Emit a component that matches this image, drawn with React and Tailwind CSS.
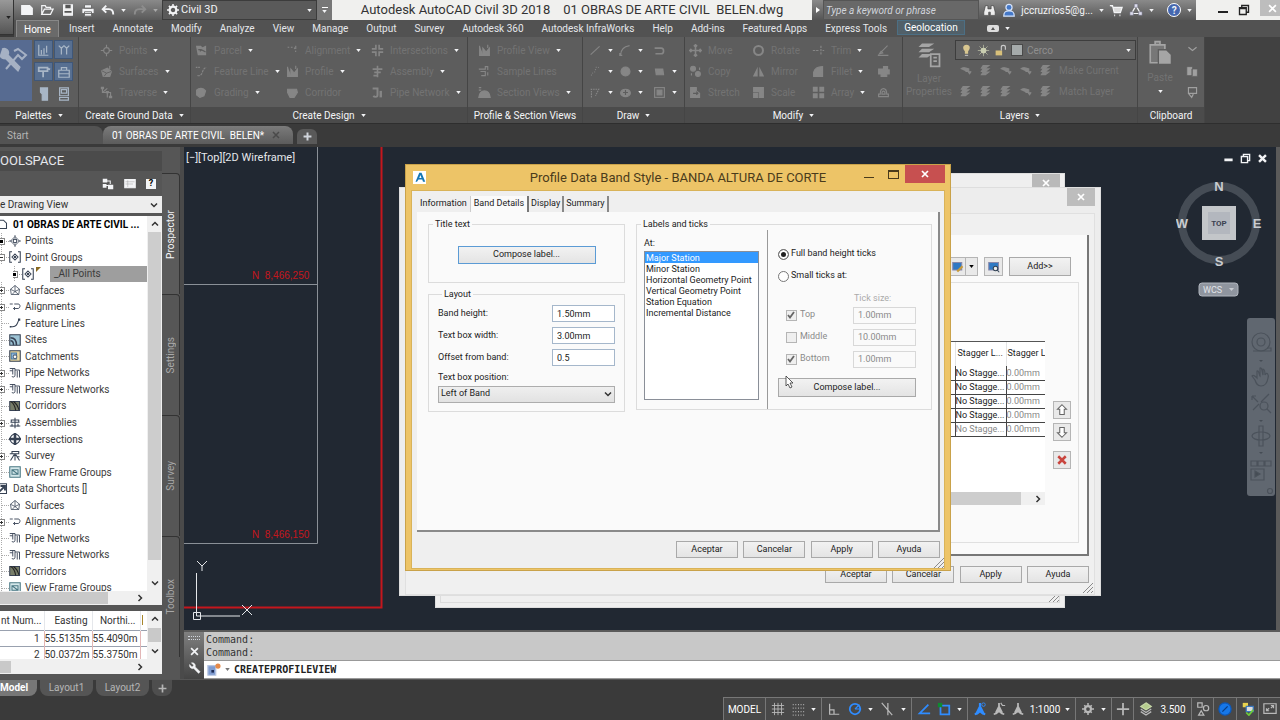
import React, { useState } from 'react';

const Icon = ({ size = 14, className = '', children }) => (
  <svg
    width={size}
    height={size}
    viewBox="0 0 16 16"
    fill="none"
    stroke="currentColor"
    strokeWidth="1.4"
    className={`shrink-0 ${className}`}
    aria-hidden="true"
  >
    {children}
  </svg>
);

const Caret = ({ className = 'text-gray-100' }) => (
  <svg width="5" height="3" viewBox="0 0 6 4" className={`shrink-0 ${className}`} aria-hidden="true">
    <path d="M0 0h6L3 4z" fill="currentColor" />
  </svg>
);

const Chevron = ({ className = '' }) => (
  <svg width="8" height="8" viewBox="0 0 8 8" fill="none" stroke="#333" strokeWidth="1.5" className={`shrink-0 ${className}`} aria-hidden="true">
    <path d="M1 2.5 4 5.5 7 2.5" />
  </svg>
);

const glyphs = {
  points: <><circle cx="8" cy="8" r="3.5" /><path d="M8 1v4M8 11v4M1 8h4M11 8h4" /></>,
  surface: <><path d="M2 7 9 4l5 4-2 6H4z" fill="currentColor" /><path d="M2 7l6 3 6-2M8 10l-3 4" stroke="#5d5d5d" strokeWidth="1" /><path d="M12 1v4" /></>,
  traverse: <><path d="M3 2v6h6v6M3 8l6-5M9 8h4v5" /><path d="M1 1h4v3H1zM7 6h4v3H7zM11 12h4v3h-4z" fill="currentColor" stroke="none" /></>,
  parcel: <><path d="M2 3h5l2 2 4-2v10H4z" fill="currentColor" /><path d="M6 9c2-3 4-1 7 1M4 7h4" stroke="#5d5d5d" /></>,
  featureLine: <><path d="M3 13c3 1 5-1 6-4s2-5 5-6" strokeDasharray="3 1" /><path d="M1 3h5" strokeDasharray="2 1" /></>,
  grading: <path d="M2 5c3-3 8-3 11 1l-2 6-5 2-4-3z" fill="currentColor" />,
  alignment: <><path d="M2 4h5c4 0 5 2 5 8" strokeDasharray="2 2" /><path d="M12 2v4" /></>,
  profile: <><path d="M2 2v12h12V5l-4 5-4-5v7" fill="currentColor" /><path d="M12 1v4" /></>,
  corridor: <path d="M2 4h11l1 4-4 6H5L2 8z" fill="currentColor" />,
  intersection: <path d="M6 1v5H1M10 1v5h5M6 15v-5H1M10 15v-5h5" strokeWidth="2" />,
  assembly: <path d="M8 1v14M2 5h12M4 9h8M3 13h4" strokeWidth="2" />,
  pipe: <><path d="M2 3h6v8c0 3-4 3-5 1" strokeWidth="2.4" /><path d="M12 6v8" strokeWidth="3" /></>,
  sample: <path d="M1 5h8V2h3v4M3 8h6v5H4M12 9v4" />,
  section: <><path d="M1 14c1-7 4-8 7-8s6 1 7 8z" fill="currentColor" /><path d="M1 2h3M1 5h3" /></>,
  line: <path d="M2 13 13 3" />,
  arc: <path d="M2 14C2 7 6 3 13 2M1 11v3h3" />,
  polyline: <path d="M2 5h8c4 0 4 7 0 7H3" strokeWidth="2" />,
  curve: <path d="M3 13c0-5 5-2 5-7s3-4 5-2" strokeDasharray="1 2" />,
  circle: <circle cx="8" cy="8" r="5.5" fill="currentColor" />,
  rect: <path d="M3 5h9l1 7H4z" fill="currentColor" />,
  polygon: <path d="M3 14V4h9l-4 8M2 4h3" strokeDasharray="2 1" />,
  ellipse: <><ellipse cx="8" cy="8.5" rx="6" ry="4.5" fill="currentColor" /><path d="M8 5v6M5 8h6" stroke="#5d5d5d" /></>,
  hatch: <><rect x="2" y="2" width="12" height="12" /><rect x="5" y="5" width="6" height="6" fill="currentColor" /></>,
  move: <path d="M8 1v14M1 8h14M6 3l2-2 2 2M6 13l2 2 2-2M3 6 1 8l2 2M13 6l2 2-2 2" strokeWidth="2" />,
  copy: <><circle cx="5" cy="4.5" r="3" fill="currentColor" /><circle cx="11" cy="11" r="3" fill="currentColor" /><path d="M3 10v3M13 3v3" /></>,
  stretch: <><path d="M2 2h7v4l4 3v5H2z" fill="currentColor" /><path d="M5 9h6M9 7l2 2-2 2" stroke="#5d5d5d" /></>,
  rotate: <circle cx="8" cy="8" r="5.5" strokeWidth="2.5" />,
  mirror: <path d="M7 2v12H1zM9 2v12h6z" fill="currentColor" stroke="none" />,
  scale: <><path d="M2 2h12v12H9V7H2z" fill="currentColor" /><path d="M2 9h5v5H2z" fill="currentColor" /></>,
  trim: <path d="M1 8h8M11 2v12M13 8h2" strokeDasharray="3 1" />,
  fillet: <path d="M2 14V9c1-4 4-7 11-7v12z" fill="currentColor" />,
  array: <path d="M1 1h6v6H1zM9 1h6v6H9zM1 9h6v6H1zM9 9h6v6H9z" fill="currentColor" stroke="none" />,
  erase: <path d="m5 10 8-8M3 12l2-3 2 2zM1 14h13" />,
  explode: <path d="M2 5h6V2h5v4h2v5h-3v3H5v-3H2z" fill="currentColor" />,
  offset: <path d="M2 13h12v-3h-2c0-9-8-9-8 0H2zM6 10c0-5 4-5 4 0z" />,
  layerA: <path d="M2 6c4-3 7-1 10 0v3H8M11 9l2 3 2-3" fill="currentColor" />,
  layerB: <path d="M5 2h7L8 5H3zM5 6h7L8 9H3zM5 10h7l-4 3H3z" fill="currentColor" />,
};

const Dim = ({ name, size = 13 }) => <Icon size={size} className="text-[#868686]">{glyphs[name]}</Icon>;

const RibbonItem = ({ icon, label, arrow = true }) => (
  <button className="flex h-[21px] items-center gap-1.5 whitespace-nowrap">
    <Dim name={icon} />
    {label && <span className="text-[#737373]">{label}</span>}
    {arrow && <Caret />}
  </button>
);

const RibbonColumn = ({ items, className }) => (
  <div className={`shrink-0 ${className}`}>
    {items.map((item, i) => <RibbonItem key={i} {...item} />)}
  </div>
);

const RibbonPanel = ({ title, arrow = true, className, children }) => (
  <section className={`flex shrink-0 flex-col border-r border-[#454545] ${className}`}>
    <div className="flex flex-1 overflow-hidden bg-[#5d5d5d] pt-[3px]">{children}</div>
    <h2 className="flex h-4 items-center justify-center gap-1.5 bg-[#4b4b4b] text-gray-100">
      {title}
      {arrow && <Caret />}
    </h2>
  </section>
);

const ribbonTabs = [
  'Home', 'Insert', 'Annotate', 'Modify', 'Analyze', 'View', 'Manage', 'Output', 'Survey',
  'Autodesk 360', 'Autodesk InfraWorks', 'Help', 'Add-ins', 'Featured Apps', 'Express Tools',
];

const QuickAccess = () => (
  <div className="flex w-[148px] shrink-0 items-center justify-between bg-gradient-to-b from-[#8a8a8a] to-[#595959] pr-1 pl-1.5 text-gray-100">
    <button aria-label="New"><Icon><path d="M2 3h9l3 3v7H2z" fill="currentColor" /></Icon></button>
    <button aria-label="Open"><Icon><path d="M2 13V3h4l1 2h5v2M2 13l3-6h10l-3 6z" /></Icon></button>
    <button aria-label="Save"><Icon><path d="M3 2h10v12H3z" fill="#eee" /><path d="M5 2h6v4H5zM4 9h8v2H4z" fill="#555" stroke="none" /></Icon></button>
    <button aria-label="Plot"><Icon><path d="M4 2h8v4H4zM1 6h14v6H1zM4 10h8v5H4z" fill="currentColor" stroke="#666" strokeWidth="1" /></Icon></button>
    <button aria-label="Undo"><Icon><path d="M6 3 2 7l4 4M2 7h7c4 0 5 2 5 6" strokeWidth="2.2" /></Icon></button>
    <Caret />
    <button aria-label="Redo" className="text-[#8d8d8d]"><Icon><path d="m10 3 4 4-4 4M14 7H7c-4 0-5 2-5 6" strokeWidth="2.2" /></Icon></button>
    <Caret className="text-[#aaa]" />
  </div>
);

const TitleBar = () => (
  <div className="flex h-5 shrink-0 bg-[#f0f0ee]">
    <QuickAccess />
    <label className="flex w-[155px] shrink-0 items-center gap-0.5 border border-[#3c3c3c] bg-[#5a5a5a] px-1 text-[11px] text-gray-100">
      <Icon size={12}><circle cx="8" cy="8" r="4.5" strokeWidth="3" /><path d="M8 0v3M8 13v3M0 8h3M13 8h3M2.5 2.5l2 2M11.5 11.5l2 2M2.5 13.5l2-2M11.5 4.5l2-2" strokeWidth="2" /></Icon>
      <select aria-label="Workspace" className="min-w-0 flex-1 appearance-none outline-none"><option>Civil 3D</option></select>
      <Caret />
    </label>
    <button aria-label="Customize" className="flex w-[15px] shrink-0 flex-col items-center justify-center gap-0.5 bg-[#777]">
      <span className="h-px w-1.5 bg-white" />
      <Caret />
    </button>
    <h1 className="flex flex-1 items-center justify-center text-[13px] whitespace-pre text-[#333]">
      {'Autodesk AutoCAD Civil 3D 2018    01 OBRAS DE ARTE CIVIL  BELEN.dwg'}
    </h1>
    <div className="flex shrink-0 bg-gradient-to-b from-[#8a8a8a] to-[#555] text-[10px] text-gray-100">
      <span className="flex w-[11px] items-center justify-center">
        <svg width="4" height="6" viewBox="0 0 4 6"><path d="M0 0v6l4-3z" fill="#fff" /></svg>
      </span>
      <input placeholder="Type a keyword or phrase" aria-label="Search" className="w-[156px] border border-[#555] bg-[#686868] px-0.5 italic placeholder:text-gray-300" />
      <div className="flex w-[217px] items-center justify-between px-1">
        <Icon size={13}><path d="M3 2h3v4h4V2h3l2 8v4H9v-4H7v4H1v-4z" fill="#eee" stroke="#444" strokeWidth=".8" /></Icon>
        <Icon size={14}><circle cx="8" cy="5" r="3.5" fill="#4478c8" stroke="#d5e3fa" /><path d="M2 15c0-5 2-6 6-6s6 1 6 6z" fill="#4478c8" stroke="#d5e3fa" /></Icon>
        <span>jccruzrios5@g...</span>
        <Caret />
        <Icon size={14}><path d="M1 3h3l2 8h7l2-6H5" fill="#ddd" /><path d="M6 14h1M12 14h1" strokeWidth="2" /></Icon>
        <Icon size={14}><path d="m8 3 5 9H3z" /><path d="M6 1h4v4H6zM1 10h4v4H1zM11 10h4v4h-4z" fill="#dde" stroke="#667" strokeWidth=".6" /></Icon>
        <Caret />
        <span className="ml-2 flex size-[14px] items-center justify-center rounded-full border border-white bg-[#4567b0] font-bold">?</span>
        <Caret />
      </div>
    </div>
    <div className="flex shrink-0 text-[#222]">
      <button aria-label="Minimize" className="flex w-8 items-center justify-end"><span className="mt-1 h-0.5 w-2.5 bg-[#222]" /></button>
      <button aria-label="Restore" className="flex w-8 items-center justify-center"><Icon size={12}><path d="M2 5h9v9H2zM2 6h9M5 5V2h9v9h-3" strokeWidth="1.8" /></Icon></button>
      <button aria-label="Close" className="h-4 w-5 bg-[#bdbdbd] pl-2 text-white">
        <Icon size={9}><path d="M2 2l12 12M14 2 2 14" strokeWidth="3" /></Icon>
      </button>
    </div>
  </div>
);

const RibbonTabs = () => (
  <nav className="flex h-[17px] shrink-0 items-stretch gap-0.5 bg-[#525252] pl-0.5 text-[10px] text-gray-200">
    {ribbonTabs.map((tab) => (
      <button
        key={tab}
        className={`whitespace-nowrap ${tab === 'Home' ? 'border border-b-0 border-[#888] bg-[#6a6a6a] px-[7px] text-white' : 'px-2'}`}
      >
        {tab}
      </button>
    ))}
    <button className="mb-0.5 border border-[#4c6f84] bg-[#516069] px-1.5 leading-3 text-white">Geolocation</button>
    <span className="ml-5 flex items-center gap-1.5">
      <svg width="12" height="7" viewBox="0 0 12 7"><rect width="12" height="7" rx="2" fill="#ddd" /><path d="M4 5l2-3 2 3z" fill="#555" /></svg>
      <Caret />
    </span>
  </nav>
);

const paletteIcons = [
  <path d="M2 2v12h11M5 8v5M8 6v7M11 3v8" />,
  <path d="M2 3l3 3v7M5 6l3-3M8 3l3 3v7M11 6l3-3" />,
  <path d="M2 3h10v4H2zM7 7v7M12 4l3 1" strokeWidth="2" />,
  <path d="M2 6h12v8H2zM5 6V3h6v3M2 10h12" />,
  <path d="M4 1h8v14H6V8L4 6z" fill="currentColor" />,
  <path d="M3 1h10v9H3zM5 3h6v4H5zM3 12h10v3H3z" />,
];

const Ribbon = () => (
  <div className="flex h-[86px] shrink-0 overflow-hidden bg-[#414141] text-[10px]">
    <RibbonPanel title="Palettes" className="w-[79px]">
      <button aria-label="Toolspace" className="h-[61px] w-8 bg-[#576b91] text-[#a6b1c4]">
        <Icon size={32} className="mb-5"><path d="M1 2c2-1 4 1 3 3l6 6-1 2-6-6C1 7 0 6 0 5" fill="currentColor" strokeWidth=".6" /><path d="M7 3l2-1 4 3-2 2-2-2-6 7" strokeWidth="1" /></Icon>
      </button>
      <div className="ml-0.5 grid grid-cols-2 content-start gap-x-px gap-y-[3px] text-[#a8b6c6]">
        {paletteIcons.map((path, i) => (
          <button key={i} aria-label={`Palette ${i + 1}`} className={`flex size-[19px] items-center justify-center ${i < 4 ? 'border border-[#3f5779] bg-[#576f91]' : ''}`}>
            <Icon>{path}</Icon>
          </button>
        ))}
      </div>
    </RibbonPanel>

    <RibbonPanel title="Create Ground Data" className="w-28">
      <RibbonColumn className="ml-[21px]" items={[
        { icon: 'points', label: 'Points' },
        { icon: 'surface', label: 'Surfaces' },
        { icon: 'traverse', label: 'Traverse' },
      ]} />
    </RibbonPanel>

    <RibbonPanel title="Create Design" className="w-[277px]">
      <RibbonColumn className="ml-1 w-[91px]" items={[
        { icon: 'parcel', label: 'Parcel' },
        { icon: 'featureLine', label: 'Feature Line' },
        { icon: 'grading', label: 'Grading' },
      ]} />
      <RibbonColumn className="w-[85px]" items={[
        { icon: 'alignment', label: 'Alignment' },
        { icon: 'profile', label: 'Profile' },
        { icon: 'corridor', label: 'Corridor', arrow: false },
      ]} />
      <RibbonColumn className="" items={[
        { icon: 'intersection', label: 'Intersections' },
        { icon: 'assembly', label: 'Assembly' },
        { icon: 'pipe', label: 'Pipe Network' },
      ]} />
    </RibbonPanel>

    <RibbonPanel title="Profile & Section Views" arrow={false} className="w-[115px]">
      <RibbonColumn className="ml-2.5" items={[
        { icon: 'profile', label: 'Profile View' },
        { icon: 'sample', label: 'Sample Lines', arrow: false },
        { icon: 'section', label: 'Section Views' },
      ]} />
    </RibbonPanel>

    <RibbonPanel title="Draw" className="w-[102px]">
      <RibbonColumn className="ml-1.5 w-[30px]" items={[{ icon: 'line' }, { icon: 'curve' }, { icon: 'polygon' }]} />
      <RibbonColumn className="w-[34px]" items={[{ icon: 'arc' }, { icon: 'circle' }, { icon: 'ellipse' }]} />
      <RibbonColumn className="" items={[{ icon: 'polyline', arrow: false }, { icon: 'rect' }, { icon: 'hatch' }]} />
    </RibbonPanel>

    <RibbonPanel title="Modify" className="w-[218px]">
      <RibbonColumn className="ml-1 w-[63px]" items={[
        { icon: 'move', label: 'Move', arrow: false },
        { icon: 'copy', label: 'Copy', arrow: false },
        { icon: 'stretch', label: 'Stretch', arrow: false },
      ]} />
      <RibbonColumn className="w-[60px]" items={[
        { icon: 'rotate', label: 'Rotate', arrow: false },
        { icon: 'mirror', label: 'Mirror', arrow: false },
        { icon: 'scale', label: 'Scale', arrow: false },
      ]} />
      <RibbonColumn className="w-[65px]" items={[
        { icon: 'trim', label: 'Trim' },
        { icon: 'fillet', label: 'Fillet' },
        { icon: 'array', label: 'Array' },
      ]} />
      <RibbonColumn className="" items={[
        { icon: 'erase', arrow: false },
        { icon: 'explode', arrow: false },
        { icon: 'offset', arrow: false },
      ]} />
    </RibbonPanel>

    <RibbonPanel title="Layers" className="w-[235px]">
      <button className="flex w-[52px] shrink-0 flex-col items-center leading-[13px] text-[#737373]">
        <Icon size={28} className="text-[#a5a5a5]">
          <path d="M4 2h7L8 4H2zM4 5h7L8 7H2zM4 8h6l-3 2H2z" fill="currentColor" stroke="none" />
          <path d="M9 8h5v7H9zM10.5 10h2M10.5 12h2" strokeWidth="1" />
        </Icon>
        <span className="mt-1">Layer<br />Properties</span>
      </button>
      <div className="flex-1 pr-px">
        <label className="flex h-5 items-center gap-1 border border-[#3d3d3d] bg-[#626262] px-1 text-[#8f8f8f]">
          <Icon size={13}><path d="M8 1c5 0 5 5 2 8v3H6V9C3 6 3 1 8 1z" fill="#d8c690" stroke="none" /><path d="M6 14h4" stroke="#bbb" /></Icon>
          <Icon size={13}><circle cx="8" cy="8" r="3.5" fill="#c9cdb0" stroke="none" /><path d="M8 1v14M1 8h14M3 3l10 10M13 3 3 13" stroke="#c9cdb0" strokeWidth=".8" /></Icon>
          <Icon size={13}><path d="M2 8h8v6H2z" fill="#d8c07a" stroke="none" /><path d="M9 8V4c0-3 5-3 5 0v3" stroke="#ccc" /></Icon>
          <span className="size-3 border border-[#4a4a4a] bg-[#a5aaaa]" />
          <select aria-label="Layer" className="min-w-0 flex-1 appearance-none outline-none"><option>Cerco</option></select>
          <Caret />
        </label>
        {['Make Current', 'Match Layer'].map((label, row) => (
          <div key={label} className="flex h-[21px] items-center gap-[7px] pl-1 whitespace-nowrap text-[#737373]">
            {['layerA', 'layerB', 'layerA', 'layerA', 'layerB'].map((name, i) => (
              <Dim key={i} name={row === 1 && i < 3 ? 'layerB' : name} />
            ))}
            <span>{label}</span>
          </div>
        ))}
      </div>
    </RibbonPanel>

    <RibbonPanel title="Clipboard" arrow={false} className="w-[67px]">
      <button className="flex w-11 flex-col items-center gap-1.5 text-[#737373]">
        <Icon size={26} className="text-[#a5a5a5]">
          <path d="M2 3h9v11H2zM5 1h3v2H5z" strokeWidth="1" fill="#777" />
          <path d="M7 6h5l3 3v6H7z" fill="currentColor" stroke="#5d5d5d" strokeWidth=".8" />
        </Icon>
        <span className="leading-3">Paste</span>
        <Caret />
      </button>
      <div className="flex flex-col pl-1 text-[#a0a0a0]">
        <span className="flex h-[21px] items-center"><Icon size={13}><path d="M3 4l5 4 5-4" /></Icon></span>
        <span className="flex h-[21px] items-center"><Icon size={13}><path d="M1 2h7v11H1zM7 5h7v9H7z" fill="currentColor" stroke="#5d5d5d" strokeWidth=".8" /></Icon></span>
        <span className="flex h-[21px] items-center"><Icon size={13}><path d="M3 2h10v7H3zM3 9l4 5 2-4" /></Icon></span>
      </div>
    </RibbonPanel>
  </div>
);

const FileTabs = () => (
  <div className="flex h-6 shrink-0 items-end border-t border-[#2e2e2e] bg-[#3a3a3a] pb-[3px] text-[10px] text-gray-300">
    <button className="h-[18px] w-[103px] rounded-tr-lg bg-[#535353] pl-[7px] text-left text-[#b5b5b5]">Start</button>
    <button className="flex h-[18px] w-[190px] items-center gap-2 rounded-t-lg bg-gradient-to-b from-[#7b7b7b] to-[#5c5c5c] pl-[9px] whitespace-pre text-white">
      {'01 OBRAS DE ARTE CIVIL  BELEN*'}
      <Icon size={8} className="text-[#4a4a4a]"><path d="M2 2l12 12M14 2 2 14" strokeWidth="3" /></Icon>
    </button>
    <button aria-label="New tab" className="ml-1 flex h-[15px] w-5 items-center justify-center rounded-t-md bg-[#595959]">
      <Icon size={9}><path d="M8 1v14M1 8h14" strokeWidth="3.5" /></Icon>
    </button>
  </div>
);

const treeGlyphs = {
  doc: <path d="M1 3h9l4 4v7H1z" />,
  points: <><circle cx="8" cy="8" r="2.5" /><path d="m8 2 6 6-6 6-6-6zM8 0v4M8 12v4M0 8h4M12 8h4" strokeWidth="1" /></>,
  group: <><path d="M4 1H1v14h3M12 1h3v14h-3" /><path d="m8 4 4 4-4 4-4-4z" /><circle cx="8" cy="8" r="1" /></>,
  surface: <path d="M8 2 2 7l1 7h10l1-7zM2 7l6 3 6-3M8 2v8l-4 4M8 10l5 4" strokeWidth="1" />,
  align: <path d="M1 4h4M7 4h5c4 0 3 6 0 6H6M8 8l-2 2 2 2" strokeWidth="1.2" />,
  feature: <><path d="M2 13h3c5 0 6-4 8-9" /><path d="M1 12h2v2H1zM12 2h3v3h-3z" fill="currentColor" stroke="none" /></>,
  site: <><path d="M1 1h14v14H1z" fill="#9cc3d4" /><path d="M2 5c6 0 8 4 8 10M2 9c3 0 4 2 4 6" strokeWidth="2" /></>,
  catchment: <><path d="M1 1h14v14H1z" fill="#e8d69c" /><path d="M3 4h7v8H3z" fill="#8fb9dd" stroke="#4779a8" /><circle cx="8" cy="9" r="2.5" fill="#fff" stroke="#567" /></>,
  pipes: <path d="M1 2h7v9c0 3-4 3-4 1M5 2v8M8 4h6v10M11 5v9M1 5h4" strokeWidth="1.2" />,
  corridor: <><path d="M1 2h13v12H1z" fill="#777d68" /><path d="M2 2c5 2 6 6 7 12M6 2c4 3 6 6 7 11" stroke="#222" /></>,
  assembly: <path d="M8 1v14M2 7h12M3 4h10v3H3zM1 12h14M4 9v4M12 9v4" />,
  intersection: <><circle cx="8" cy="8" r="6.5" /><path d="M8 0v16M0 8h16" strokeWidth="3.5" /></>,
  survey: <path d="M4 2h9v3H4zM8 5v9M7 6l-5 8M9 6l5 8M1 5h4M10 9h4" />,
  frame: <><path d="M1 1h14v14H1z" stroke="#4a7884" fill="#d4e7ea" /><path d="M4 5h8v6H4zM4 5l8 6" stroke="#4a7884" /></>,
  shortcut: <><path d="M1 1h13v13H1z" /><path d="M4 12 11 5M6 4h6v6" strokeWidth="2.5" /></>,
};

const treeItems = [
  { level: 0, icon: 'doc', label: '01 OBRAS DE ARTE CIVIL ...', bold: true },
  { level: 1, icon: 'points', label: 'Points', box: '•' },
  { level: 1, icon: 'group', label: 'Point Groups', box: '-' },
  { level: 2, icon: 'group', label: '_All Points', box: '•', selected: true },
  { level: 1, icon: 'surface', label: 'Surfaces', box: '+' },
  { level: 1, icon: 'align', label: 'Alignments', box: '+' },
  { level: 1, icon: 'feature', label: 'Feature Lines' },
  { level: 1, icon: 'site', label: 'Sites' },
  { level: 1, icon: 'catchment', label: 'Catchments' },
  { level: 1, icon: 'pipes', label: 'Pipe Networks', box: '+' },
  { level: 1, icon: 'pipes', label: 'Pressure Networks', box: '+' },
  { level: 1, icon: 'corridor', label: 'Corridors' },
  { level: 1, icon: 'assembly', label: 'Assemblies', box: '+' },
  { level: 1, icon: 'intersection', label: 'Intersections' },
  { level: 1, icon: 'survey', label: 'Survey', box: '+' },
  { level: 1, icon: 'frame', label: 'View Frame Groups' },
  { level: 0, icon: 'shortcut', label: 'Data Shortcuts []' },
  { level: 1, icon: 'surface', label: 'Surfaces' },
  { level: 1, icon: 'align', label: 'Alignments', box: '+' },
  { level: 1, icon: 'pipes', label: 'Pipe Networks' },
  { level: 1, icon: 'pipes', label: 'Pressure Networks' },
  { level: 1, icon: 'corridor', label: 'Corridors' },
  { level: 1, icon: 'frame', label: 'View Frame Groups' },
];

// Left half of an expander box sits outside the pane, as the tree is scrolled sideways.
const Expander = ({ box }) => (
  <svg width="9" height="16" viewBox="0 0 9 16" className="shrink-0" aria-hidden="true">
    <path d="M1.5 0v16" stroke="#aaa" strokeDasharray="1 1" />
    <path d="M2 8.5h7" stroke="#aaa" strokeDasharray="1 1" />
    {box && <rect x="-1.5" y="5.5" width="6" height="6" fill="#fff" stroke="#888" />}
    {box === '•' && <rect x="0" y="7" width="3" height="3" fill="#000" />}
    {(box === '-' || box === '+') && <path d="M0 8.5h3" stroke="#333" />}
    {box === '+' && <path d="M1.5 7v3" stroke="#333" />}
  </svg>
);

const TreeItem = ({ level, icon, label, box, bold, selected }) => (
  <li className="flex items-center whitespace-nowrap">
    {level === 0 && <Icon size={12} className="mr-1 -ml-1 text-gray-700">{treeGlyphs[icon]}</Icon>}
    {level > 0 && <span className={level === 2 ? 'ml-[13px] flex' : 'flex'}><Expander box={box} /></span>}
    {level > 0 && <Icon size={12} className="text-gray-700">{treeGlyphs[icon]}</Icon>}
    {selected && <svg width="5" height="5" className="mr-[9px] mb-2 ml-0.5"><path d="M0 0h5L0 5z" fill="#8a6a20" /></svg>}
    <span
      className={`${selected ? 'flex-1 self-stretch bg-[#9e9e9e] pl-1 leading-4' : level > 0 ? 'pl-1' : 'pl-px'} ${bold ? 'font-bold text-black' : ''}`}
    >
      {label}
    </span>
  </li>
);

const points = [
  ['1', '55.5135m', '55.4090m'],
  ['2', '50.0372m', '55.3750m'],
];

const Toolspace = () => (
  <aside className="flex w-[184px] shrink-0 bg-[#565656]">
    <div className="flex w-[162px] flex-col overflow-hidden">
      <div className="mt-1 h-5 bg-[#4b4b4b] text-[13px] leading-5 text-gray-200">OOLSPACE</div>
      <div className="flex h-[25px] items-center justify-end gap-2.5 pr-1.5 text-gray-100">
        <Icon size={12}><path d="M1 1h6v5H1zM8 9h7v6H8zM1 8h5v5H1z" fill="currentColor" stroke="none" /><path d="M6 4h5v4M5 10h3" /></Icon>
        <Icon size={12}><path d="M1 2h14v11H1z" fill="currentColor" /><path d="M2 5h12M2 8h10M5 3v9" stroke="#999" strokeWidth=".6" /></Icon>
        <span className="flex size-2.5 items-center justify-center bg-gray-100 text-[9px] font-bold text-black">?</span>
      </div>
      <label className="flex h-[17px] shrink-0 items-center bg-[#ededed] pr-1 text-[10px] text-[#333]">
        <select aria-label="View" className="flex-1 appearance-none outline-none"><option>e Drawing View</option></select>
        <Chevron />
      </label>
      <div className="mt-[3px] flex h-[375px] shrink-0 overflow-hidden bg-white">
        <ul className="grid h-[380px] flex-1 auto-rows-fr overflow-hidden text-[10px] text-[#3c3c3c]">
          {treeItems.map((item, i) => <TreeItem key={i} {...item} />)}
        </ul>
        <div className="flex w-[15px] flex-col items-center justify-between bg-[#f0f0f0] py-1">
          <Chevron className="rotate-180" />
          <span className="h-[328px] w-[13px] bg-[#cdcdcd]" />
          <span className="flex h-6 items-end"><Chevron /></span>
        </div>
      </div>
      <div className="flex h-[14px] shrink-0 items-center bg-[#f0f0f0]">
        <span className="h-3 w-[108px] bg-[#c9c9c9]" />
        <Chevron className="ml-7 -rotate-90" />
      </div>
      <div className="mt-[6px] flex h-12 shrink-0 overflow-hidden bg-white text-[#333]">
        <div className="flex-1 overflow-hidden">
          <table className="w-full table-fixed text-right text-[10px]">
            <colgroup><col className="w-11" /><col className="w-12" /><col className="w-12" /><col /></colgroup>
            <thead>
              <tr className="h-[19px] border-b border-gray-400 whitespace-nowrap">
                <th className="pr-0.5 font-normal">nt Num...</th>
                <th className="border-l border-gray-200 pr-1 font-normal">Easting</th>
                <th className="border-l border-gray-200 pr-1 font-normal">Northi...</th>
                <th className="border-l border-gray-200 font-normal"><span className="mr-auto ml-px block h-2.5 w-px bg-[#a8862c]" /></th>
              </tr>
            </thead>
            <tbody>
              {points.map(([id, east, north]) => (
                <tr key={id} className="h-4 border-b border-gray-400">
                  <td className="pr-1">{id}</td>
                  <td className="border-l border-[#e2b6b6] pr-1">{east}</td>
                  <td className="border-l border-[#e2b6b6] pr-1">{north}</td>
                  <td className="border-l border-[#e2b6b6]" />
                </tr>
              ))}
            </tbody>
          </table>
        </div>
        <div className="flex w-[15px] flex-col items-center justify-between bg-[#f0f0f0] py-1">
          <Chevron className="rotate-180" />
          <span className="h-[14px] w-[13px] bg-[#c9c9c9]" />
          <Chevron />
        </div>
      </div>
      <div className="flex h-[15px] shrink-0 items-center bg-[#f0f0f0]">
        <span className="h-3 w-[11px] bg-[#c9c9c9]" />
        <Chevron className="ml-[125px] -rotate-90" />
      </div>
    </div>
    <div className="w-[22px] border-r-4 border-[#4a4a4a] pt-[26px] text-[10px] text-[#a8a8a8]">
      {['Prospector', 'Settings', 'Survey', 'Toolbox'].map((tab) => (
        <button
          key={tab}
          className={`flex h-[121px] w-[18px] items-center justify-center rounded-tr border-t border-r border-[#333] [writing-mode:vertical-rl] ${tab === 'Prospector' ? 'bg-[#5b5b5b] text-gray-100' : ''}`}
        >
          <span className="rotate-180">{tab}</span>
        </button>
      ))}
    </div>
  </aside>
);

const DialogButton = ({ className = 'border-[#a9a9a9]', children }) => (
  <button className={`flex items-center justify-center border bg-gradient-to-b from-[#f2f2f2] to-[#e4e4e4] text-[9px] text-[#222] ${className}`}>
    {children}
  </button>
);

const DialogActions = () => (
  <div className="ml-auto flex h-[17px] w-[264px] justify-between">
    {['Aceptar', 'Cancelar', 'Apply', 'Ayuda'].map((label) => (
      <DialogButton key={label} className="w-[62px] border-[#a9a9a9]">{label}</DialogButton>
    ))}
  </div>
);

const Grip = ({ className = '' }) => (
  <svg width="10" height="10" viewBox="0 0 10 10" stroke="#8a8a8a" className={className} aria-hidden="true">
    <path d="M0 10 10 0M4 10l6-6M8 10l2-2" />
  </svg>
);

const GroupBox = ({ title, className, children }) => (
  <fieldset className={`border border-[#dcdcdc] ${className}`}>
    <legend className="ml-1 px-0.5 leading-3">{title}</legend>
    {children}
  </fieldset>
);

const Field = ({ label, value, id }) => (
  <div className="flex items-center justify-between">
    <label htmlFor={id}>{label}</label>
    <input id={id} defaultValue={value} className="h-[17px] w-[63px] border border-[#a5b7cb] bg-white px-1 outline-none" />
  </div>
);

const TickRow = ({ label, value, checked }) => (
  <div className="flex h-[22px] items-center justify-between">
    <label className="flex items-center gap-[3px]">
      <span className="grid size-3 place-items-center">
        <input type="checkbox" disabled defaultChecked={checked} className="col-start-1 row-start-1 size-[11px] appearance-none border border-[#b5b5b5] bg-[#efefef]" />
        {checked && (
          <svg width="8" height="8" viewBox="0 0 8 8" className="col-start-1 row-start-1" aria-hidden="true">
            <path d="M1 4l2 2.5L7 1" fill="none" stroke="#666" strokeWidth="1.8" />
          </svg>
        )}
      </span>
      {label}
    </label>
    <input disabled defaultValue={value} aria-label={`${label} tick size`} className="h-[17px] w-[63px] border border-[#d8d8d8] px-1" />
  </div>
);

const stations = [
  'Major Station', 'Minor Station', 'Horizontal Geometry Point',
  'Vertical Geometry Point', 'Station Equation', 'Incremental Distance',
];

const BandStyleDialog = () => {
  const [station, setStation] = useState('Major Station');
  const [ticks, setTicks] = useState('full');

  return (
    <div className="absolute top-[17px] left-[221px] flex h-[407px] w-[546px] flex-col border border-[#c9a24a] bg-[#edc467] px-[5px] pb-[5px] text-[9px] text-[#222]">
      <header className="grid h-[25px] shrink-0 grid-cols-[96px_1fr_96px] items-start">
        <span className="mt-1.5 ml-0.5 flex size-[13px] items-center justify-center bg-white">
          <Icon size={12} className="text-[#1677b5]"><path d="M2 13 7 1h3l5 12h-3l-1-3H6l-2 3zM7 8h3L8.5 4z" fill="currentColor" stroke="none" /></Icon>
        </span>
        <h2 className="text-center text-[13px] leading-[25px] whitespace-nowrap text-[#4a3b1b]">Profile Data Band Style - BANDA ALTURA DE CORTE</h2>
        <div className="flex justify-end">
          <button aria-label="Minimize" className="flex h-[18px] w-6 items-center justify-center"><span className="mt-1.5 h-px w-2.5 bg-[#4a3b1b]" /></button>
          <button aria-label="Maximize" className="flex h-[18px] w-6 items-center justify-center"><span className="h-[9px] w-[11px] border border-t-2 border-[#4a3b1b]" /></button>
          <button aria-label="Close" className="flex h-[18px] w-10 items-center justify-center bg-[#c75050] text-white">
            <Icon size={8}><path d="M2 2l12 12M14 2 2 14" strokeWidth="3.5" /></Icon>
          </button>
        </div>
      </header>
      <div className="flex flex-1 flex-col border border-[#d9b359] bg-[#efefef] pt-[5px] pr-1 pl-[5px]">
        <div className="flex h-4">
          {['Information', 'Band Details', 'Display', 'Summary'].map((tab) => (
            <button
              key={tab}
              className={`h-4 ${tab === 'Band Details' ? 'border-r-2 border-[#777] bg-[#fafafa] px-[3px]' : tab === 'Information' ? 'border-r border-[#ccc] px-[3px]' : 'border-r-2 border-[#888] px-0.5'}`}
            >
              {tab}
            </button>
          ))}
        </div>
        <div className="flex h-[320px] items-start gap-[11px] border-r-2 border-b-2 border-[#8a8a8a] bg-[#fafafa] pt-1.5 pr-1.5 pl-[11px]">
          <div className="w-[197px] shrink-0">
            <GroupBox title="Title text" className="h-[65px]">
              <DialogButton className="mx-auto mt-4 h-[18px] w-[138px] border-[#5b9bd5]">Compose label...</DialogButton>
            </GroupBox>
            <GroupBox title="Layout" className="mt-[5px] h-[124px] px-[9px]">
              <div className="mt-[5px] flex flex-col gap-[5px]">
                <Field id="height" label="Band height:" value="1.50mm" />
                <Field id="width" label="Text box width:" value="3.00mm" />
                <Field id="offset" label="Offset from band:" value="0.5" />
              </div>
              <label className="mt-[5px] block" htmlFor="position">Text box position:</label>
              <span className="mt-px grid items-center">
                <select id="position" className="col-start-1 row-start-1 h-[17px] appearance-none border border-[#adadad] bg-gradient-to-b from-[#efefef] to-[#e2e2e2] px-0.5 outline-none">
                  <option>Left of Band</option>
                </select>
                <Chevron className="col-start-1 row-start-1 mr-[3px] justify-self-end" />
              </span>
            </GroupBox>
          </div>
          <GroupBox title="Labels and ticks" className="h-[192px] min-w-0 flex-1">
            <div className="flex h-[179px]">
              <div className="w-[131px] shrink-0 border-r border-[#999] pt-[7px] pl-[7px]">
                <span id="at">At:</span>
                <ul role="listbox" aria-labelledby="at" className="h-[149px] w-[115px] border border-[#8a8f98] bg-white">
                  {stations.map((name) => (
                    <li
                      key={name}
                      role="option"
                      aria-selected={name === station}
                      onClick={() => setStation(name)}
                      className={`h-[11px] pl-px leading-[13px] whitespace-nowrap ${name === station ? 'bg-[#3399ff] text-white' : ''}`}
                    >
                      {name}
                    </li>
                  ))}
                </ul>
              </div>
              <div className="flex-1 pt-[13px] pr-4 pl-2.5">
                {[['full', 'Full band height ticks'], ['small', 'Small ticks at:']].map(([key, label]) => (
                  <label key={key} className="flex h-[22px] items-center gap-0.5">
                    <input
                      type="radio"
                      name="ticks"
                      checked={ticks === key}
                      onChange={() => setTicks(key)}
                      className="size-[11px] appearance-none rounded-full border border-[#777] bg-white checked:bg-[#222] checked:shadow-[inset_0_0_0_2px_#fff]"
                    />
                    {label}
                  </label>
                ))}
                <div className="pt-[5px] pl-[7px] text-[#8a8a8a]">
                  <p className="ml-auto h-3 w-[62px] leading-3 text-[#aaa]">Tick size:</p>
                  <TickRow label="Top" value="1.00mm" checked />
                  <TickRow label="Middle" value="10.00mm" checked={false} />
                  <TickRow label="Bottom" value="1.00mm" checked />
                </div>
                <DialogButton className="mt-2 h-[19px] w-[138px] border-[#a9a9a9]">Compose label...</DialogButton>
              </div>
            </div>
          </GroupBox>
        </div>
        <div className="mt-[9px]"><DialogActions /></div>
        <Grip className="-mr-1 ml-auto" />
      </div>
    </div>
  );
};

const ToolButton = ({ label, className = '', children }) => (
  <button aria-label={label} className={`flex items-center justify-center border border-[#b5b5b5] bg-[#e9e9e9] ${className}`}>{children}</button>
);

const BandSetDialog = () => (
  <div className="absolute top-10 left-[215px] flex h-[409px] w-[702px] flex-col border border-[#dedede] bg-[#ededed] px-[5px] text-[9px] text-[#222]">
    <header className="flex h-[25px] shrink-0 justify-end">
      <button aria-label="Close" className="flex h-[18px] w-7 items-center justify-center bg-[#bdbdbd] text-white">
        <Icon size={8}><path d="M2 2l12 12M14 2 2 14" strokeWidth="3.5" /></Icon>
      </button>
    </header>
    <div className="flex-1 border border-[#e0e0e0] bg-[#f0f0f0] pt-[21px] pr-[5px]">
      <div className="h-[321px] border-r-2 border-b-2 border-[#777] bg-[#fafafa] pt-[22px] pr-2">
        <div className="flex h-[19px] justify-end pr-2">
          <ToolButton label="Edit style" className="w-4"><Icon size={12}><path d="M1 2h12v10H1z" fill="#2f79c4" stroke="#88a" /><path d="m7 14 7-7" stroke="#c79b3c" strokeWidth="3" /></Icon></ToolButton>
          <ToolButton label="Style menu" className="mr-1.5 w-3 border-l-0"><Caret className="text-black" /></ToolButton>
          <ToolButton label="Preview" className="mr-1.5 w-[19px]"><Icon size={12}><path d="M1 2h13v10H1z" fill="#2f79c4" stroke="#88a" /><circle cx="10" cy="10" r="3" fill="#eee" stroke="#345" /><path d="m12 12 3 3" stroke="#345" /></Icon></ToolButton>
          <DialogButton className="w-[62px] border-[#a9a9a9]">Add&gt;&gt;</DialogButton>
        </div>
        <div className="mt-[6px] flex h-[261px] justify-end border border-[#e0e0e0] pt-[58px] pr-[7px]">
          <div className="h-[164px] w-[160px] overflow-hidden border-t border-[#555] bg-white">
            <div className="h-[150px]">
              <table className="w-full table-fixed whitespace-nowrap">
                <colgroup><col /><col className="w-[51px]" /><col className="w-[39px]" /></colgroup>
                <thead>
                  <tr className="h-6">
                    <th />
                    <th className="border-l border-[#e4e4e4] pl-0.5 text-left font-normal">Stagger L...</th>
                    <th className="overflow-hidden border-l border-[#e4e4e4] pl-px text-left font-normal">Stagger L</th>
                  </tr>
                </thead>
                <tbody>
                  {[0, 1, 2, 3, 4].map((row) => (
                    <tr key={row} className={`h-[14px] border-b border-[#444] ${row === 4 ? 'text-[#888]' : ''}`}>
                      <td />
                      <td className="border-l border-[#444] leading-3">No Stagge...</td>
                      <td className="border-l border-[#444] leading-3 text-[#888]">0.00mm</td>
                    </tr>
                  ))}
                </tbody>
              </table>
            </div>
            <div className="flex h-[13px] items-center bg-[#f0f0f0]">
              <span className="h-full w-[136px] bg-[#cdcdcd]" />
              <Chevron className="ml-[13px] -rotate-90" />
            </div>
          </div>
          <div className="ml-2 flex w-[18px] flex-col pt-[60px]">
            <ToolButton label="Move up" className="size-[18px]"><Icon size={12} className="text-[#666]"><path d="m8 1 6 6h-3v7H5V7H2z" fill="#fff" /></Icon></ToolButton>
            <ToolButton label="Move down" className="mt-1 size-[18px]"><Icon size={12} className="text-[#666]"><path d="m8 15 6-6h-3V2H5v7H2z" fill="#fff" /></Icon></ToolButton>
            <ToolButton label="Delete" className="mt-2.5 size-[18px]"><Icon size={10}><path d="M2 2l12 12M14 2 2 14" stroke="#c9453e" strokeWidth="4" /></Icon></ToolButton>
          </div>
        </div>
      </div>
      <div className="mt-2.5"><DialogActions /></div>
      <Grip className="-mr-1 ml-auto" />
    </div>
  </div>
);

const BackDialog = () => (
  <div className="absolute top-[26px] left-[251px] flex h-[435px] w-[630px] flex-col justify-between border border-[#dedede] bg-[#efefef] px-1 pb-1">
    <div className="flex h-[14px] w-7 items-end justify-center self-end bg-[#b9b9b9] pb-px text-white">
      <Icon size={8}><path d="M2 2l12 12M14 2 2 14" strokeWidth="3.5" /></Icon>
    </div>
    <div className="flex justify-end border border-t-0 border-[#dcdcdc]"><Grip /></div>
  </div>
);

const ViewCube = () => (
  <svg width="92" height="152" viewBox="1176 174 92 152" className="absolute top-[27px] right-2" aria-hidden="true">
    <circle cx="1219" cy="223" r="37" fill="none" stroke="#454c55" strokeWidth="8" />
    <rect x="1202" y="206" width="34" height="34" fill="#c3c6c9" />
    <rect x="1208" y="212" width="22" height="22" fill="#b3b7be" />
    <g fill="#c9ccd0" textAnchor="middle" className="font-['Liberation_Sans',sans-serif] text-[13px] font-bold">
      <text x="1219" y="191">N</text>
      <text x="1219" y="266">S</text>
      <text x="1182" y="228">W</text>
      <text x="1257" y="228">E</text>
    </g>
    <text x="1219" y="226" fill="#3b4250" textAnchor="middle" className="text-[8px] font-bold">TOP</text>
    <rect x="1199" y="283" width="39" height="13" rx="3" fill="#8f959f" stroke="#b0b5bd" />
    <text x="1203" y="293" fill="#e0e3e8" className="text-[9px]">WCS</text>
    <path d="M1229 288h5l-2.5 3z" fill="#c8ccd2" />
  </svg>
);

const NavigationBar = () => (
  <svg width="28" height="178" viewBox="0 0 28 178" fill="none" stroke="#4b525b" strokeWidth="1.2" className="absolute top-[171px] right-px" aria-hidden="true">
    <rect width="28" height="178" rx="3" fill="#606770" stroke="none" />
    <circle cx="14" cy="24" r="9" />
    <circle cx="14" cy="24" r="4" />
    <path d="M20 30h4v3H6" />
    <path d="M8 62l-3-4c1-2 4 1 5 2v-7c2-1 2 4 3 5v-8c2-1 2 4 3 7v-6c2 0 2 3 2 6 2-4 4 0 3 3-1 6-4 8-7 8-4 0-5-3-6-6z" />
    <path d="M5 78l6 6M5 78h4M5 78v4M22 76l-8 8M6 92l6-6" />
    <circle cx="17" cy="88" r="4" />
    <path d="M20 91l4 4" />
    <ellipse cx="14" cy="118" rx="9" ry="4" />
    <path d="M12 108h4v20h-4z" />
    <path d="M4 143h6v5H4zM11 143h6v5h-6zM18 143h6v5h-6zM4 151h13v11H4z" />
    <path d="M8 153v6l5-3z" fill="#454c54" />
    <circle cx="23" cy="173" r="2.5" />
    <path d="M12 42h4l-2 2zM12 102h4l-2 2zM12 134h4l-2 2z" fill="#454c54" stroke="none" />
  </svg>
);

const Canvas = () => (
  <main className="relative flex-1 overflow-hidden border-r-4 border-[#5a5a5a] bg-[#212832]">
    <svg width="215" height="482" viewBox="184 147 215 482" fill="none" className="absolute top-0 left-0" aria-hidden="true">
      <path d="M317.5 147v396.5H184M184 284.5h133" stroke="#8a9097" />
      <path d="M381.5 147v460.5H184" stroke="#c5161d" strokeWidth="2" />
      <path d="M196.5 573v43H240M193.5 612.5h7v7h-7zM197 561l5 5 5-5M202 566v5M242 605l10 10M252 605l-10 10" stroke="#e5e7ea" />
    </svg>
    <p className="absolute top-[3px] left-0.5 text-[11px] text-gray-200">[−][Top][2D Wireframe]</p>
    <p className="absolute top-[123px] left-[68px] font-['Liberation_Sans',sans-serif] text-[10px] leading-3 whitespace-pre text-[#c5161d]">{'N  8,466,250'}</p>
    <p className="absolute top-[382px] left-[68px] font-['Liberation_Sans',sans-serif] text-[10px] leading-3 whitespace-pre text-[#c5161d]">{'N  8,466,150'}</p>

    <div className="absolute top-1.5 right-2 flex gap-1.5 text-gray-100">
      <Icon size={11}><path d="M2 10h12" strokeWidth="4" /></Icon>
      <Icon size={11}><path d="M2 5h9v9H2zM5 5V2h9v9h-3" strokeWidth="2" /></Icon>
      <Icon size={11}><path d="M3 3l10 10M13 3 3 13" strokeWidth="3.5" /></Icon>
    </div>
    <ViewCube />
    <NavigationBar />

    <BackDialog />
    <BandSetDialog />
    <BandStyleDialog />
    <svg width="9" height="14" viewBox="0 0 9 14" className="absolute top-[228px] left-[601px]" aria-hidden="true">
      <path d="M1 1v10l2-2 2 4 2-1-2-4h3z" fill="#fff" stroke="#333" strokeWidth=".8" />
    </svg>
  </main>
);

const CommandLine = () => (
  <div className="flex h-[49px] shrink-0 border-t-2 border-[#5a5a5a] font-['DejaVu_Sans_Mono',monospace] text-[10px]">
    <div className="flex w-5 flex-col items-center justify-between bg-gradient-to-b from-[#808080] to-[#444] py-1 text-gray-100">
      <span className="h-1 w-3 border-y border-dotted border-gray-300" />
      <Icon size={9}><path d="M2 2l12 12M14 2 2 14" strokeWidth="3" /></Icon>
      <Icon size={13}><path d="M2 3l3 3 2-2-3-3c3-1 6 2 5 5l6 6-2 2-6-6c-3 1-6-2-5-5z" fill="currentColor" strokeWidth=".5" /></Icon>
    </div>
    <div className="flex flex-1 flex-col">
      <div className="h-7 bg-[#c8c8c8] pt-px pl-0.5 leading-[13px] text-[#333]">
        <p>Command:</p>
        <p>Command:</p>
      </div>
      <label className="flex flex-1 items-center gap-1 border-y border-[#999] bg-white pl-[3px]">
        <Icon size={14}><path d="M1 3h9v11H1z" fill="#7e9bd0" stroke="#b8c6e2" /><path d="M5 8h3v3H5z" fill="#1d2c55" stroke="none" /><circle cx="12.5" cy="3.5" r="3" fill="#e58a4a" stroke="none" /></Icon>
        <Caret className="text-[#777]" />
        <input aria-label="Command" defaultValue="CREATEPROFILEVIEW" className="flex-1 font-bold text-[#222] outline-none" />
      </label>
    </div>
  </div>
);

const LayoutTabs = () => (
  <div className="flex h-[18px] shrink-0 gap-[3px] border-t border-[#555] bg-[#3a3a3a] text-[10px] text-[#b5b5b5]">
    <button className="h-4 w-[37px] rounded-br-lg bg-[#777] text-left leading-4 font-bold text-white">Model</button>
    <button className="h-4 w-[53px] rounded-b-lg bg-[#555] leading-4">Layout1</button>
    <button className="h-4 w-[53px] rounded-b-lg bg-[#555] leading-4">Layout2</button>
    <button aria-label="Add layout" className="flex h-4 w-5 items-center justify-center rounded-b-lg bg-[#4e4e4e]">
      <Icon size={9}><path d="M8 1v14M1 8h14" strokeWidth="3" /></Icon>
    </button>
  </div>
);

const StatusGroup = ({ className, children }) => (
  <div className={`flex items-center justify-around border-l border-[#777] px-0.5 ${className}`}>{children}</div>
);

const personPath = 'M8 1v6M8 7c0 4-2 6-6 7M8 7c0 4 2 6 6 7M5 11l3-6 3 6z';

const StatusBar = () => (
  <footer className="flex h-[23px] shrink-0 justify-end bg-[#3a3a3a] text-[10px]">
    <div className="flex border-t border-[#777] bg-[#484848] text-[#b9b9b9]">
      <StatusGroup className="w-[42px] text-white">MODEL</StatusGroup>
      <StatusGroup className="w-14">
        <Icon><path d="M4 1v14M8 1v14M12 1v14M1 4h14M1 8h14M1 12h14" strokeWidth="1" /></Icon>
        <Icon><path d="M2 3h13M2 7h13M2 11h13M2 15h13" strokeDasharray="1 2" /></Icon>
        <Caret />
      </StatusGroup>
      <StatusGroup className="w-[90px]">
        <Icon><path d="M3 2v12h11M3 9h5v5" /></Icon>
        <Icon className="text-[#2f8cff]"><circle cx="8" cy="8" r="6" strokeWidth="2" /><path d="M8 8h7M8 8l5-5" /></Icon>
        <Caret />
        <Icon><path d="M2 1l12 14M9 1v14" /></Icon>
        <Caret />
      </StatusGroup>
      <StatusGroup className="w-14">
        <Icon className="text-[#2f8cff]"><path d="M13 3 3 13h12" strokeWidth="2" /></Icon>
        <Icon className="text-[#2f8cff]"><path d="M4 4h10v10H4z" strokeWidth="2" /><path d="M1 1h5v5H1z" fill="#0e8a2f" stroke="none" /></Icon>
        <Caret />
      </StatusGroup>
      <StatusGroup className="w-[108px]">
        <Icon className="text-[#2f8cff]"><path d={personPath} strokeWidth="2.5" /><circle cx="12" cy="3" r="2" strokeWidth="1" /></Icon>
        <Icon><path d={personPath} strokeWidth="2" /><path d="M10 1l2 3h3" /></Icon>
        <Icon><path d={personPath} strokeWidth="2" /></Icon>
        <span className="text-white">1:1000</span>
        <Caret />
      </StatusGroup>
      <StatusGroup className="w-9">
        <Icon size={12}><circle cx="8" cy="8" r="4" strokeWidth="3" /><path d="M8 0v3M8 13v3M0 8h3M13 8h3M3 3l2 2M11 11l2 2M3 13l2-2M11 5l2-2" strokeWidth="2" /></Icon>
        <Caret />
      </StatusGroup>
      <StatusGroup className="w-[22px]"><Icon><path d="M8 1v14M1 8h14" strokeWidth="2" /></Icon></StatusGroup>
      <StatusGroup className="w-[58px]">
        <Icon><path d="m8 1 6 4-6 4-6-4z" fill="#b5cc8d" stroke="#c5d6a5" /><path d="m2 8 6 4 6-4M2 11l6 4 6-4" /></Icon>
        <span className="text-white">3.500</span>
      </StatusGroup>
      <StatusGroup className="w-[22px]"><Icon><path d="M2 1h5v5H2z" /><circle cx="11.5" cy="7" r="3" /><path d="m6 10 3 5H3z" /></Icon></StatusGroup>
      <StatusGroup className="w-[23px]"><Icon><circle cx="8" cy="8" r="7" fill="#1677e8" stroke="#0d58b8" /><path d="m5 11 6-6" stroke="#0a3c80" /></Icon></StatusGroup>
      <StatusGroup className="w-[22px]"><Icon><path d="M2 1h6v5H2z" fill="#e8d24c" stroke="none" /><path d="M6 5h8v6H6z" fill="#ddd" stroke="#3a78c0" /><path d="m6 12 3 3 5-6" stroke="#6ecb3a" strokeWidth="2" /></Icon></StatusGroup>
      <StatusGroup className="w-[22px]"><Icon><path d="M1 2h14v11H1zM4 10l3-3M9 7l3-3M4 7v3h3M9 4h3v3" /></Icon></StatusGroup>
    </div>
  </footer>
);

export default function App() {
  return (
    <div className="flex h-screen flex-col overflow-hidden bg-[#3a3a3a] font-[Roboto,'Open_Sans',sans-serif]">
      <div className="flex shrink-0">
        <button aria-label="Application menu" className="flex h-[35px] w-[14px] shrink-0 items-center justify-end border-r border-b border-[#333] bg-gradient-to-b from-[#999] to-[#555] pr-0.5">
          <Caret className="text-[#222]" />
        </button>
        <div className="flex min-w-0 flex-1 flex-col">
          <TitleBar />
          <RibbonTabs />
        </div>
      </div>
      <Ribbon />
      <FileTabs />
      <div className="flex min-h-0 flex-1">
        <Toolspace />
        <div className="flex min-w-0 flex-1 flex-col">
          <Canvas />
          <CommandLine />
        </div>
      </div>
      <LayoutTabs />
      <StatusBar />
    </div>
  );
}
